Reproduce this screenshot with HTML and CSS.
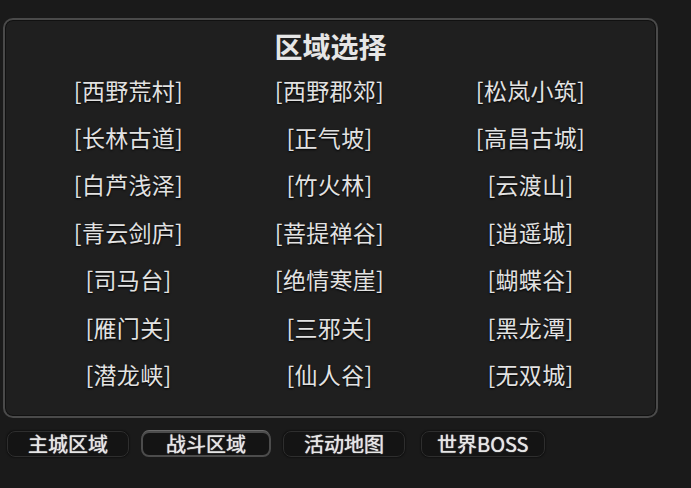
FILE: index.html
```html
<!DOCTYPE html>
<html lang="zh">
<head>
    <meta charset="UTF-8">
    <meta name="viewport" content="width=device-width, initial-scale=1.0">
    <title>区域选择</title>
    <link rel="stylesheet" href="styles.css">
</head>
<body>
    <div class="panel">
        <h1>区域选择</h1>
        <div class="area-grid">
            <span>[西野荒村]</span>
            <span>[西野郡郊]</span>
            <span>[松岚小筑]</span>
            <span>[长林古道]</span>
            <span>[正气坡]</span>
            <span>[高昌古城]</span>
            <span>[白芦浅泽]</span>
            <span>[竹火林]</span>
            <span>[云渡山]</span>
            <span>[青云剑庐]</span>
            <span>[菩提禅谷]</span>
            <span>[逍遥城]</span>
            <span>[司马台]</span>
            <span>[绝情寒崖]</span>
            <span>[蝴蝶谷]</span>
            <span>[雁门关]</span>
            <span>[三邪关]</span>
            <span>[黑龙潭]</span>
            <span>[潜龙峡]</span>
            <span>[仙人谷]</span>
            <span>[无双城]</span>
        </div>
    </div>

    <div class="tabs">
        <div class="tab">主城区域</div>
        <div class="tab active">战斗区域</div>
        <div class="tab">活动地图</div>
        <div class="tab boss">世界BOSS</div>
    </div>
</body>
</html>
```

FILE: styles.css
```css
body {
    margin: 0;
    background-color: #1a1a1a;
    color: #dcdcdc;
    font-family: "Noto Sans CJK SC", "Noto Sans", sans-serif;
    width: 691px;
    height: 488px;
    overflow: hidden;
}
.panel {
    margin: 18px 0 0 3px;
    width: 651px;
    height: 396px;
    border: 2px solid #4a4a4a;
    border-radius: 10px;
    background-color: #1f1f1f;
    box-shadow: inset 0 0 0 1px #111;
}
h1 {
    margin: 0;
    padding-top: 10px;
    text-align: center;
    font-size: 28px;
    line-height: 32px;
    font-weight: bold;
    color: #e6e6e6;
}
.area-grid {
    display: grid;
    grid-template-columns: repeat(3, 201px);
    grid-auto-rows: 47.4px;
    justify-content: center;
    align-items: center;
    margin-top: 4px;
    margin-left: -2px;
}
.area-grid span {
    text-align: center;
    font-size: 23px;
    line-height: 30px;
    color: #e2e2e2;
    letter-spacing: 0.3px;
    text-shadow: 0 1px 2px #000;
}
.tabs {
    display: flex;
    gap: 12px;
    margin: 13px 0 0 7px;
}
.tab {
    height: 24px;
    line-height: 24px;
    padding: 0 20px;
    font-size: 20px;
    color: #e6e6e6;
    background-color: #141414;
    border: 1px solid #2e2e2e;
    border-radius: 8px;
    box-shadow: 0 0 2px #000;
    text-shadow: 0 0 1px #fff;
}
.tab.active {
    border: 2px solid #4c4c4c;
    height: 22px;
    line-height: 22px;
    padding: 0 23px;
    box-shadow: 0 -2px 0 -1px #6a6a6a;
}
.tab.boss {
    margin-left: 4px;
    padding: 0 15px;
}
```
